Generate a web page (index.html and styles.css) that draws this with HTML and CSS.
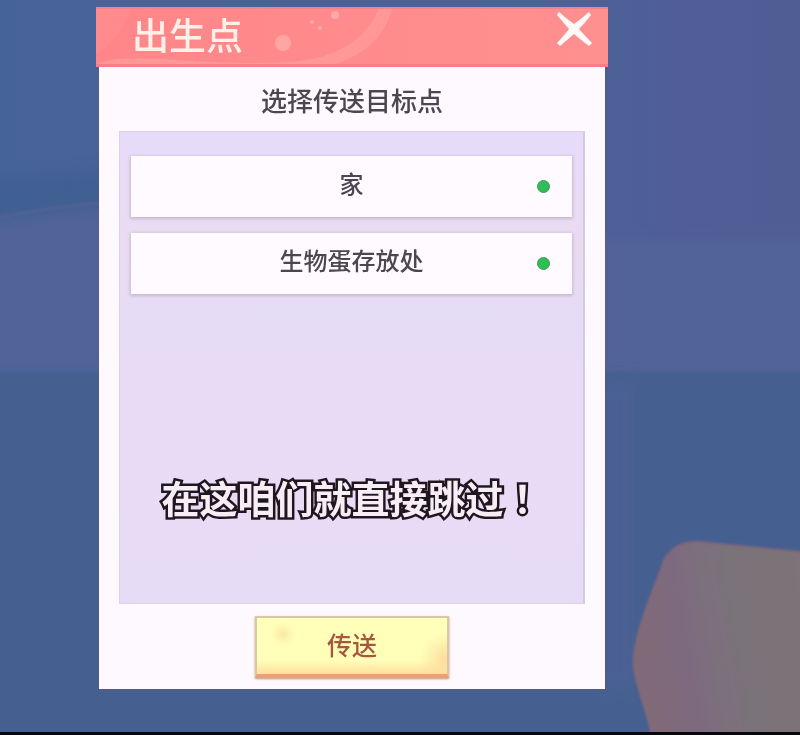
FILE: index.html
```html
<!DOCTYPE html>
<html lang="zh-CN">
<head>
    <meta charset="UTF-8">
    <meta name="viewport" content="width=device-width, initial-scale=1.0">
    <title>出生点</title>
    <link rel="stylesheet" href="styles.css">
</head>
<body>
    <svg class="scene" viewBox="0 0 800 735" preserveAspectRatio="none" aria-hidden="true">
        <defs>
            <linearGradient id="sky" x1="0" y1="0" x2="1" y2="0">
                <stop offset="0" stop-color="#466397"/>
                <stop offset="0.7" stop-color="#4a6297"/>
                <stop offset="0.86" stop-color="#505d96"/>
                <stop offset="1" stop-color="#505d95"/>
            </linearGradient>
            <linearGradient id="rock" x1="0" y1="0.6" x2="1" y2="0.4">
                <stop offset="0" stop-color="#816b76"/>
                <stop offset="0.3" stop-color="#7e6b80"/>
                <stop offset="0.6" stop-color="#7a7379"/>
                <stop offset="1" stop-color="#7d7378"/>
            </linearGradient>
            <filter id="soft" x="-20%" y="-20%" width="140%" height="140%">
                <feGaussianBlur stdDeviation="7"/>
            </filter>
            <filter id="edge">
                <feGaussianBlur stdDeviation="1"/>
            </filter>
        </defs>
        <rect width="800" height="735" fill="url(#sky)"/>
        <g filter="url(#soft)">
            <path d="M-20 178L110 172V215L-20 230Z" fill="#415f92"/>
            <path d="M-20 222L110 206V372H-20Z" fill="#516398"/>
            <path d="M595 240H820V375H595Z" fill="#516498"/>
        </g>
        <path d="M0 218Q50 207 100 203" fill="none" stroke="#536496" stroke-width="2" filter="url(#edge)"/>
        <path d="M-20 372H820V760H-20Z" fill="#456090" filter="url(#edge)"/>
        <path d="M607 380H634V690H607Z" fill="#4b6194" filter="url(#soft)"/>
        <path d="M653 745C648 703 632 686 634 655C638 623 657 582 665 558C676 543 690 540 708 543L810 553V745Z" fill="url(#rock)" stroke="#83677a" stroke-width="2" filter="url(#edge)"/>
    </svg>

    <main class="stage">
        <section class="dialog" aria-labelledby="dialog-title">
            <header class="dialog-header">
                <svg class="header-art" viewBox="0 0 320 55" aria-hidden="true">
                    <path d="M0 55Q20 46 80 51Q190 58 225 48Q270 34 282 0H296Q285 40 240 55Z" fill="#ff9c9b" opacity="0.75"/>
                    <path d="M0 0H35Q25 30 0 45Z" fill="#ff9091" opacity="0.6"/>
                    <circle cx="187" cy="34" r="8" fill="#ffa6a3"/>
                    <circle cx="239" cy="6" r="4" fill="#ffaaa9"/>
                    <circle cx="216" cy="13" r="2" fill="#ffaaa9"/>
                    <circle cx="224" cy="19" r="2" fill="#ffaaa9"/>
                </svg>
                <h1 id="dialog-title">出生点</h1>
                <button class="close" type="button" aria-label="关闭">
                    <svg viewBox="0 0 36 36" aria-hidden="true">
                        <path d="M3 0Q11 7 18 12Q25 7 33 0L35 3Q29 11 23 17Q30 25 36 31L33 34Q25 28 18 22Q11 28 4 34L1 31Q7 25 13 17Q7 10 1 3Z" fill="#fff9f7"/>
                    </svg>
                </button>
            </header>

            <div class="dialog-body">
                <p class="hint">选择传送目标点</p>

                <div class="panel">
                    <ul class="targets">
                        <li><button class="target" type="button">家<span class="dot"></span></button></li>
                        <li><button class="target" type="button">生物蛋存放处<span class="dot"></span></button></li>
                    </ul>
                    <p class="caption" lang="zh-TW">在这咱们就直接跳过！</p>
                </div>

                <button class="confirm" type="button">传送</button>
            </div>
        </section>
    </main>
</body>
</html>
```

FILE: styles.css
```css
* {
    box-sizing: border-box;
}
body {
    margin: 0;
    font-family: "Noto Sans CJK SC", sans-serif;
    color: #4c4650;
    background: #456090;
}
h1, p, ul {
    margin: 0;
    padding: 0;
}
button {
    font: inherit;
    color: inherit;
    cursor: pointer;
}
.scene {
    position: fixed;
    inset: 0;
    width: 100%;
    height: 100%;
    z-index: -1;
}
.stage {
    display: flex;
    min-height: 100vh;
    padding: 7px 24% 43px 12%;
    border-bottom: 3px solid #08080c;
}

/* dialog */
.dialog {
    flex: 1;
    display: flex;
    flex-direction: column;
}
.dialog-header {
    position: relative;
    display: flex;
    justify-content: space-between;
    align-items: flex-start;
    height: 60px;
    padding: 3px 16px 0 36px;
    background: linear-gradient(90deg, #ff8588, #ff8b8c 50%, #ff9090);
    border-top: 2px solid #f0838f;
    border-bottom: 3px solid #f57f86;
}
.header-art {
    position: absolute;
    left: 0;
    top: 0;
    height: 100%;
}
.dialog-header h1 {
    position: relative;
    font-size: 37px;
    line-height: 44px;
    font-weight: 500;
    color: #fff1e8;
}
.close {
    width: 36px;
    height: 36px;
    padding: 0;
    border: 0;
    background: none;
}
.close svg {
    display: block;
}
.dialog-body {
    flex: 1;
    display: flex;
    flex-direction: column;
    margin: 0 3px;
    padding: 16px 20px 11px;
    background: #fef8ff;
    box-shadow: 0 0 2px #6c5380;
}
.hint {
    font-size: 26px;
    line-height: 34px;
    font-weight: 500;
    text-align: center;
}

/* target list */
.panel {
    flex: 1;
    display: flex;
    flex-direction: column;
    margin-top: 14px;
    padding: 24px 11px 78px;
    background: linear-gradient(#e7dbfb, #e9dbf0 25%, #e5dcf5 38%, #e9dbf6 60%, #e6dcf5);
    border: 1px solid #ded2ea;
    border-right: 2px solid #d5c8df;
}
.targets {
    display: flex;
    flex-direction: column;
    gap: 16px;
    list-style: none;
}
.target {
    position: relative;
    display: block;
    width: 100%;
    height: 61px;
    padding: 0 0 8px;
    border: 0;
    background: #fefaff;
    font-size: 24px;
    line-height: 36px;
    font-weight: 500;
    box-shadow: 0 1px 3px 1px #c9b9cd;
}
.dot {
    position: absolute;
    right: 22px;
    top: 24px;
    width: 13px;
    height: 13px;
    border-radius: 50%;
    background: #31bd55;
    border: 1px solid #3a9c56;
}
.caption {
    margin-top: auto;
    font-family: "Noto Sans CJK TC", "Noto Sans CJK SC", sans-serif;
    font-size: 38px;
    line-height: 56px;
    font-weight: 700;
    text-align: center;
    white-space: nowrap;
    color: #f6edf5;
    -webkit-text-stroke: 5px #21151f;
    paint-order: stroke fill;
}

.confirm {
    align-self: center;
    width: 194px;
    height: 62px;
    margin-top: 12px;
    padding: 0 0 4px;
    border: 2px solid #d8c9a5;
    border-bottom: 4px solid #eda078;
    background:
        radial-gradient(circle at 26px 16px, #fbe9a5, transparent 12px),
        radial-gradient(circle at 100% 75%, #fddb9b, transparent 28px),
        linear-gradient(#ffffba 75%, #ffdf9c);
    box-shadow: 0 1px 2px #c48e7c;
    font-size: 25px;
    line-height: 36px;
    font-weight: 500;
    color: #a95540;
}
```
